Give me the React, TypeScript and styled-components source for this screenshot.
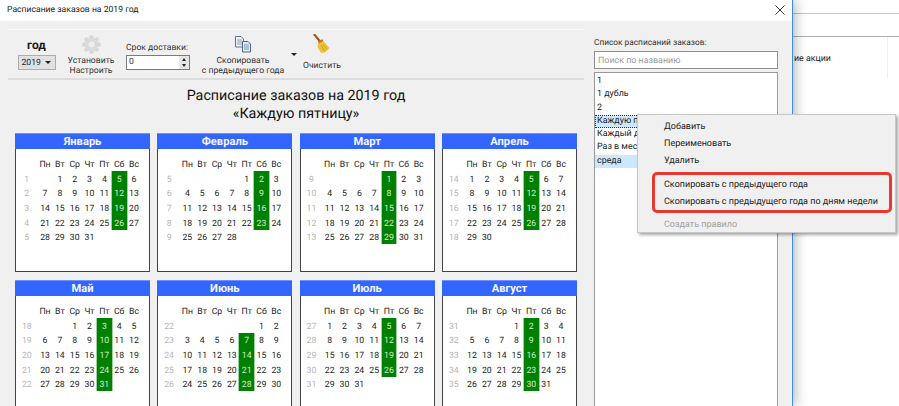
import React from "react";
import styled, { createGlobalStyle } from "styled-components";

const Global = createGlobalStyle`
  html, body { margin: 0; padding: 0; background: #fff; overflow: hidden; }
  body { width: 899px; height: 406px; font-family: Roboto, "Liberation Sans", Arial, sans-serif; color: #1a1a1a; text-rendering: geometricPrecision; }
`;

const Desktop = styled.div`
  position: relative;
  display: flex;
  width: 899px;
  height: 406px;
  overflow: hidden;
  background: #fff;
`;

const Window = styled.div`
  width: 793px;
  height: 406px;
  flex: none;
  box-sizing: border-box;
  display: flex;
  flex-direction: column;
  background: #f0f0f0;
  border-right: 1px solid #3a8ee6;
  box-shadow: 2px 0 12px rgba(0, 0, 0, 0.3);
  position: relative;
  z-index: 1;
`;

const TitleBar = styled.div`
  height: 21px;
  flex: none;
  background: #fff;
  display: flex;
  align-items: center;
  justify-content: space-between;
  padding: 0 6px 1px 7px;
  box-sizing: border-box;
  font-size: 8.6px;
`;

const Body = styled.div`
  flex: 1;
  display: flex;
  min-height: 0;
`;

const Left = styled.div`
  width: 584px;
  flex: none;
  padding: 8px 0 0 8px;
  box-sizing: border-box;
`;

const Toolbar = styled.div`
  height: 48px;
  display: flex;
  position: relative;
  border-top: 1px solid #fafafa;
  border-bottom: 2px solid #dcdcdc;
  font-size: 8.6px;
`;

const YearGroup = styled.div`
  width: 39px;
  margin-left: 9px;
  display: flex;
  flex-direction: column;
  align-items: center;
  padding-top: 8px;
`;

const YearLabel = styled.div`
  font-weight: 700;
  font-size: 12px;
  line-height: 14px;
`;

const YearSelect = styled.div`
  width: 38px;
  height: 15px;
  margin-top: 3px;
  background: #e1e1e1;
  border: 1px solid #adadad;
  box-sizing: border-box;
  display: flex;
  align-items: center;
  justify-content: space-between;
  padding: 0 4px 0 3px;
  font-size: 8.6px;
`;

const Arrow = styled.span`
  width: 0;
  height: 0;
  border-left: 3px solid transparent;
  border-right: 3px solid transparent;
  border-top: 3px solid #222;
`;

const ToolButton = styled.div<{ $w: number; $ml: number; $top: number }>`
  width: ${(p) => p.$w}px;
  margin-left: ${(p) => p.$ml}px;
  padding-top: ${(p) => p.$top}px;
  display: flex;
  flex-direction: column;
  align-items: center;
  text-align: center;
  line-height: 10px;
  color: #333;
  white-space: nowrap;
  svg { display: block; }
`;

const ButtonLabel = styled.div<{ $mt: number }>`
  margin-top: ${(p) => p.$mt}px;
`;

const DeliveryGroup = styled.div`
  width: 64px;
  margin-left: 5px;
  padding-top: 13px;
  color: #333;
`;

const DeliveryLabel = styled.div`
  line-height: 11px;
  white-space: nowrap;
`;

const Spinner = styled.div`
  height: 15px;
  margin-top: 1px;
  background: #fff;
  border: 1px solid #7a7a7a;
  box-sizing: border-box;
  display: flex;
  justify-content: space-between;
  padding-left: 2px;
  line-height: 13px;
  font-size: 8.6px;
`;

const SpinButtons = styled.div`
  width: 10px;
  background: #e6e6e6;
  display: flex;
  flex-direction: column;
  align-items: center;
  justify-content: space-evenly;
`;

const SpinUp = styled.span`
  width: 0;
  height: 0;
  border-left: 2px solid transparent;
  border-right: 2px solid transparent;
  border-bottom: 3px solid #222;
`;

const SpinDown = styled(Arrow)`
  border-left-width: 2px;
  border-right-width: 2px;
`;

const DropArrow = styled(Arrow)`
  margin: 23px 0 0 3px;
  align-self: flex-start;
`;

const Heading = styled.div`
  width: 576px;
  margin-top: 6.5px;
  text-align: center;
  font-size: 14.3px;
  line-height: 18px;
  color: #111;
`;

const Calendars = styled.div`
  display: grid;
  grid-template-columns: repeat(4, 135px);
  column-gap: 7.33px;
  row-gap: 8px;
  margin: 10.5px 0 0 7px;
`;

const Card = styled.div`
  height: 139px;
  box-sizing: border-box;
  background: #fff;
  border: 1px solid #444;
  border-top: 0;
`;

const MonthHeader = styled.div`
  height: 16px;
  margin: 0 -1px;
  background: #3366ff;
  border-top: 1px solid #6f90ff;
  box-sizing: border-box;
  color: #f4f6ff;
  font-weight: 700;
  font-size: 11.2px;
  line-height: 16px;
  text-align: center;
`;

const MonthGrid = styled.div`
  display: grid;
  grid-template-columns: 21.6px repeat(7, 14.83px);
  grid-auto-rows: 14.67px;
  margin-top: 7.5px;
  font-size: 8.7px;
  line-height: 12px;
  text-align: center;
  color: #222;
`;

const WeekNumber = styled.div`
  color: #b5b5b5;
  padding-top: 2.5px;
  box-sizing: border-box;
`;

const Day = styled.div<{ $on?: boolean }>`
  white-space: nowrap;
  padding-top: 2.5px;
  box-sizing: border-box;
  background: ${(p) => (p.$on ? "#008000" : "transparent")};
  color: ${(p) => (p.$on ? "#d4ecd4" : "inherit")};
  box-shadow: ${(p) => (p.$on ? "-1px 0 #9fd09f, 1px 0 #9fd09f" : "none")};
`;

const Right = styled.div`
  flex: 1;
  padding: 16px 14px 0 10px;
  display: flex;
  flex-direction: column;
  font-size: 8.9px;
  color: #333;
`;

const ListLabel = styled.div`
  line-height: 13px;
  font-size: 8.3px;
  white-space: nowrap;
`;

const Search = styled.div`
  height: 18px;
  margin-top: 1px;
  box-sizing: border-box;
  background: #fff;
  border: 1px solid #8f8f8f;
  padding-left: 3px;
  line-height: 18px;
  color: #9a9a9a;
`;

const List = styled.div`
  flex: 1;
  margin-top: 3px;
  background: #fff;
  border: 1px solid #9a9a9a;
  border-bottom: 0;
  padding-top: 2px;
`;

const ListItem = styled.div<{ $selected?: boolean; $focus?: boolean }>`
  height: 13.3px;
  line-height: 13px;
  padding-left: 2px;
  white-space: nowrap;
  color: #222;
  box-sizing: border-box;
  background: ${(p) => (p.$selected ? "#cce8ff" : "transparent")};
  outline: ${(p) => (p.$focus ? "1px dotted #333" : "none")};
  outline-offset: -1px;
`;

const Behind = styled.div`
  flex: 1;
  min-width: 0;
  font-size: 8.8px;
  color: #222;
`;

const BehindTopLine = styled.div`
  height: 13px;
  border-bottom: 1px solid #c4c4c4;
`;

const BehindBar = styled.div`
  height: 22px;
  border-bottom: 1px solid #aeaeae;
`;

const BehindRow = styled.div`
  height: 41px;
  display: flex;
  align-items: center;
  width: 95px;
  box-sizing: border-box;
  border-right: 1px solid #f0f0f0;
  white-space: nowrap;
  padding: 2px 0 0 1px;
`;

const Menu = styled.div`
  position: absolute;
  left: 637px;
  top: 114px;
  width: 259px;
  height: 119px;
  box-sizing: border-box;
  background: #f0f0f0;
  border: 1px solid #c8c8c8;
  box-shadow: 2px 2px 3px rgba(0, 0, 0, 0.35);
  padding: 4px 0 0 26px;
  font-size: 9px;
  z-index: 2;
`;

const MenuItem = styled.div<{ $disabled?: boolean; $gap?: number }>`
  height: 17px;
  line-height: 17px;
  margin-top: ${(p) => p.$gap ?? 0}px;
  white-space: nowrap;
  color: ${(p) => (p.$disabled ? "#a0a0a0" : "#222")};
`;

const Callout = styled.div`
  position: absolute;
  left: 14px;
  top: 57px;
  width: 240px;
  height: 41px;
  box-sizing: border-box;
  border: 3px solid #e63a30;
  border-radius: 5px;
  pointer-events: none;
`;

type Month = { name: string; week: number; offset: number; days: number; mark: number };

const months: Month[] = [
  { name: "Январь", week: 1, offset: 1, days: 31, mark: 5 },
  { name: "Февраль", week: 5, offset: 4, days: 28, mark: 5 },
  { name: "Март", week: 9, offset: 4, days: 31, mark: 4 },
  { name: "Апрель", week: 14, offset: 0, days: 30, mark: 4 },
  { name: "Май", week: 18, offset: 2, days: 31, mark: 4 },
  { name: "Июнь", week: 22, offset: 5, days: 30, mark: 4 },
  { name: "Июль", week: 27, offset: 0, days: 31, mark: 4 },
  { name: "Август", week: 31, offset: 3, days: 31, mark: 4 },
];

const weekdays = ["Пн", "Вт", "Ср", "Чт", "Пт", "Сб", "Вс"];

const MonthCard = ({ m }: { m: Month }) => {
  const cells: React.ReactNode[] = [<div key="corner" />];
  weekdays.forEach((d) => cells.push(<Day key={d}>{d}</Day>));
  for (let r = 0; r < 5; r++) {
    cells.push(<WeekNumber key={`w${r}`}>{m.week + r}</WeekNumber>);
    for (let c = 0; c < 7; c++) {
      const n = r * 7 + c - m.offset + 1;
      const valid = n >= 1 && n <= m.days;
      cells.push(
        <Day key={`${r}-${c}`} $on={valid && c === m.mark}>
          {valid ? n : ""}
        </Day>
      );
    }
  }
  return (
    <Card>
      <MonthHeader>{m.name}</MonthHeader>
      <MonthGrid>{cells}</MonthGrid>
    </Card>
  );
};

const CloseIcon = () => (
  <svg width="10" height="10" viewBox="0 0 10 10" style={{ marginRight: 1 }}>
    <path d="M0.5 0.5 L9.5 9.5 M9.5 0.5 L0.5 9.5" stroke="#333" strokeWidth="1" fill="none" />
  </svg>
);

const GearIcon = () => {
  const teeth = [0, 45, 90, 135, 180, 225, 270, 315];
  return (
    <svg width="19" height="19" viewBox="0 0 20 20">
      {teeth.map((a) => (
        <rect key={a} x="8" y="0.5" width="4" height="19" rx="1" fill="#d8d8d8" transform={`rotate(${a} 10 10)`} />
      ))}
      <circle cx="10" cy="10" r="7" fill="#dadada" />
      <circle cx="10" cy="10" r="3.2" fill="#eeeeee" />
    </svg>
  );
};

const CopyIcon = () => (
  <svg width="18" height="18" viewBox="0 0 18 18">
    <path d="M1.5 1.5 H7 L9.5 4 V12 H1.5 Z" fill="#eef3f8" stroke="#5d7690" />
    <path d="M3 5 H8 M3 7 H8 M3 9 H8" stroke="#8aa0b5" />
    <path d="M8.5 6.5 H14 L16.5 9 V17 H8.5 Z" fill="#dfeaf5" stroke="#4c6a88" />
    <path d="M10 10 H15 M10 12 H15 M10 14 H15" stroke="#7f98b0" />
  </svg>
);

const BroomIcon = () => (
  <svg width="18" height="20" viewBox="0 0 18 20">
    <path d="M1.5 0.8 L7.5 8" stroke="#a8552a" strokeWidth="2.2" strokeLinecap="round" />
    <path d="M5.5 7.5 L9 5.5 L16.5 14 L12 18.5 L8 19 L4.5 13 Z" fill="#ecc43a" />
    <path d="M5 7.5 L9.3 5.3 L10.3 6.8 L6 9.5 Z" fill="#c9702b" />
    <path d="M8 11 L11.5 17 M10 10 L14 15.5" stroke="#c99a22" strokeWidth="0.8" />
  </svg>
);

export default function App() {
  return (
    <Desktop>
      <Global />
      <Window>
        <TitleBar>
          <span>Расписание заказов на 2019 год</span>
          <CloseIcon />
        </TitleBar>
        <Body>
          <Left>
            <Toolbar>
              <YearGroup>
                <YearLabel>год</YearLabel>
                <YearSelect>
                  2019
                  <Arrow />
                </YearSelect>
              </YearGroup>
              <ToolButton $w={60} $ml={5} $top={5}>
                <GearIcon />
                <ButtonLabel $mt={2}>Установить</ButtonLabel>
                <div>Настроить</div>
              </ToolButton>
              <DeliveryGroup>
                <DeliveryLabel>Срок доставки:</DeliveryLabel>
                <Spinner>
                  0
                  <SpinButtons>
                    <SpinUp />
                    <SpinDown />
                  </SpinButtons>
                </Spinner>
              </DeliveryGroup>
              <ToolButton $w={90} $ml={8} $top={5}>
                <CopyIcon />
                <ButtonLabel $mt={3}>Скопировать</ButtonLabel>
                <div>с предыдущего года</div>
              </ToolButton>
              <DropArrow />
              <ToolButton $w={40} $ml={5} $top={4}>
                <BroomIcon />
                <ButtonLabel $mt={7}>Очистить</ButtonLabel>
              </ToolButton>
            </Toolbar>
            <Heading>
              Расписание заказов на 2019 год
              <br />
              «Каждую пятницу»
            </Heading>
            <Calendars>
              {months.map((m) => (
                <MonthCard key={m.name} m={m} />
              ))}
            </Calendars>
          </Left>
          <Right>
            <ListLabel>Список расписаний заказов:</ListLabel>
            <Search>Поиск по названию</Search>
            <List>
              <ListItem>1</ListItem>
              <ListItem>1 дубль</ListItem>
              <ListItem>2</ListItem>
              <ListItem $selected $focus>
                Каждую пятницу
              </ListItem>
              <ListItem>Каждый день</ListItem>
              <ListItem>Раз в месяц</ListItem>
              <ListItem $selected>среда</ListItem>
            </List>
          </Right>
        </Body>
      </Window>
      <Behind>
        <BehindTopLine />
        <BehindBar />
        <BehindRow>ие акции</BehindRow>
      </Behind>
      <Menu>
        <MenuItem>Добавить</MenuItem>
        <MenuItem>Переименовать</MenuItem>
        <MenuItem>Удалить</MenuItem>
        <MenuItem $gap={7}>Скопировать с предыдущего года</MenuItem>
        <MenuItem>Скопировать с предыдущего года по дням недели</MenuItem>
        <MenuItem $gap={6} $disabled>
          Создать правило
        </MenuItem>
        <Callout />
      </Menu>
    </Desktop>
  );
}
